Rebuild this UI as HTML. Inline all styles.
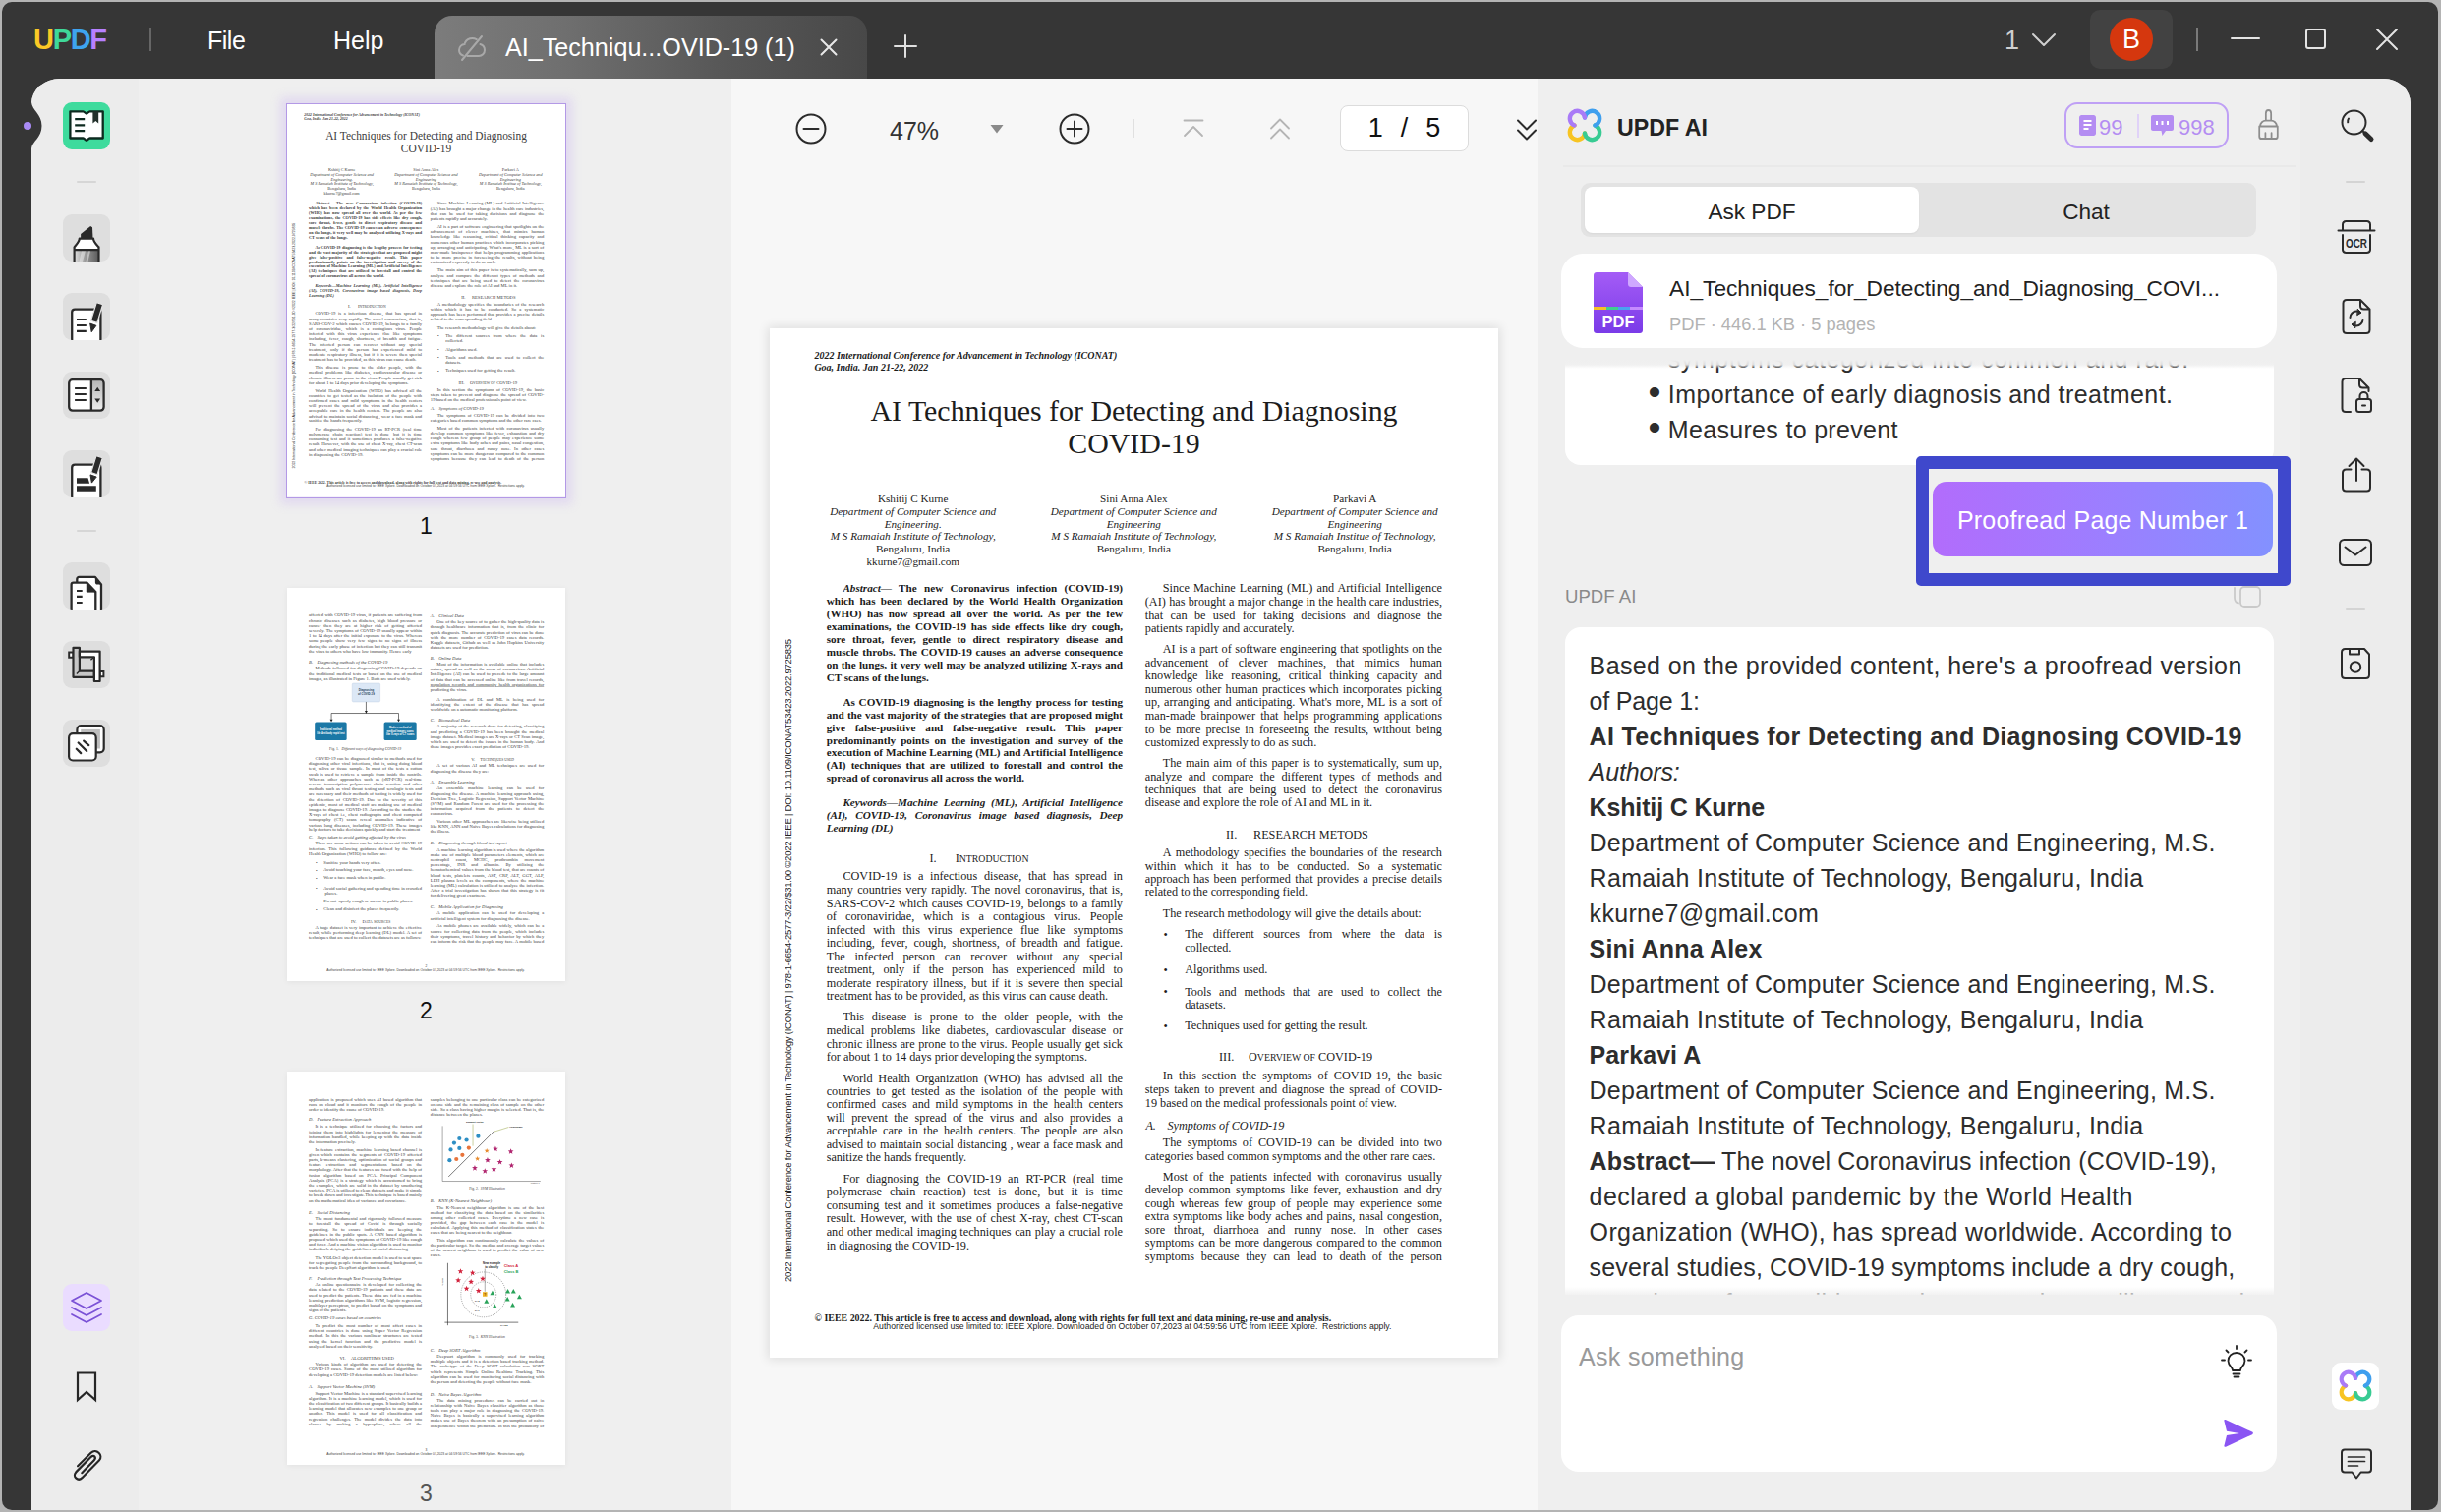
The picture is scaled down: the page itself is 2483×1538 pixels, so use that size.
<!DOCTYPE html>
<html lang="en"><head><meta charset="utf-8"><title>UPDF - AI_Techniques_for_Detecting_and_Diagnosing_COVID-19 (1)</title>
<style>

*{box-sizing:border-box}
html,body{margin:0;padding:0}
body{width:2483px;height:1538px;overflow:hidden;background:#b4b4b4;font-family:"Liberation Sans",sans-serif;position:relative}
#win{position:absolute;left:2px;top:2px;width:2478px;height:1534px;background:#363636;border-radius:10px;overflow:hidden}
#win>*{position:absolute}
#content{left:30px;top:78px;width:2420px;height:1456px;border-radius:29px 27px 0 0 / 25px 25px 0 0;overflow:hidden;background:#efefef}
#content>*{position:absolute;top:0;height:1456px}
#notch{left:30px;top:102px}
#dot{left:21.8px;top:121.800px;width:8.400px;height:8.400px;border-radius:50%;background:#a98bf5}
.abs{position:absolute}
/* title bar */
#tb{left:0;top:0;width:2478px;height:78px;color:#fff}
#tb>*{position:absolute}
.logo{left:32px;top:22px;font:bold 29px/32px "Liberation Sans",sans-serif;letter-spacing:-1.3px}
.tsep{width:2px;height:24px;top:26px;background:#666}
.menu{top:24px;font-size:25px;line-height:30px;color:#fff}
#tab{left:440px;top:14px;width:440px;height:64px;border-radius:18px 18px 0 0;background:linear-gradient(90deg,#7c7c7c 0%,#6f6f6f 30%,#585858 65%,#484848 100%)}
#tab>*{position:absolute}
.tabt{left:72px;top:16px;font-size:25.15px;line-height:32px;white-space:nowrap;color:#fff;letter-spacing:0}
/* left toolbar */
#ltb{left:0;width:109px;background:#ececec}
#ltb>*{position:absolute}
.tile{left:32px;width:48px;height:48px;border-radius:9px;background:#dedede;overflow:hidden}
.tile svg{position:absolute;left:0;top:0}
.hsep{left:46px;width:20px;height:2px;background:#d6d6d6;border-radius:1px}
#thumbs{left:109px;width:603px;background:#efefef}
#thumbs>*{position:absolute}
.thumb{width:283px;height:400px;background:#fff;overflow:hidden;box-shadow:0 1px 6px rgba(0,0,0,.06)}
.thumb.sel{outline:2.6px solid #b399e6;outline-offset:-1px;box-shadow:0 0 9px 7px rgba(190,160,245,.26)}
.thumb .pg{color:#3c3c3c}
.tn{left:151px;width:283px;text-align:center;font-size:23px;line-height:30px;color:#111}
.tn.g{color:#555}
#viewer{left:712px;width:820px;background:#f7f7f7}
#viewer>*{position:absolute}
.pgshadow{width:741px;height:1047px;box-shadow:0 0 10px 2px rgba(0,0,0,.10)}
.zt{font-size:25px;line-height:30px;color:#333}
.pbox{left:619px;top:27px;width:131px;height:47px;border:1.5px solid #dcdcdc;border-radius:8px;background:#fff;font-size:27px;line-height:44px;color:#111;text-align:center;white-space:pre;word-spacing:1.5px}
/* AI panel */
#ai{left:1532px;width:776px;background:#efefef}
#ai>*{position:absolute}
.ait{left:81px;top:34.5px;font:bold 23.2px/30px "Liberation Sans",sans-serif;color:#222;letter-spacing:0}
.badge{left:536px;top:24px;width:167px;height:47px;border:2px solid #bfa0f5;border-radius:13px}
.badge>*{position:absolute}
.badge span{font-size:22px;line-height:26px;color:#b48df2;top:11px}
.tabs{left:76px;top:106px;width:687px;height:55px;border-radius:9px;background:#e3e3e3}
.tabs>*{position:absolute}
.tabon{left:4px;top:4px;width:340px;height:47px;border-radius:8px;background:#fff;box-shadow:0 1px 2px rgba(0,0,0,.05)}
.tabl{top:13.5px;font-size:22.6px;line-height:32px;color:#222;text-align:center;width:340px;letter-spacing:0}
.card{background:#fff}
.fcard{left:56px;top:178px;width:728px;height:96px;border-radius:22px}
.fcard>*{position:absolute}
.fname{left:110px;top:19px;font-size:22.7px;line-height:32px;color:#222;white-space:nowrap;letter-spacing:0}
.fmeta{left:110px;top:58.5px;font-size:18.3px;line-height:26px;color:#b3b3b3;white-space:nowrap;letter-spacing:0}
.msg{font-size:25px;line-height:36px;color:#2d2d2d;white-space:nowrap}
.msg div{height:36px}
.lbl{left:60px;top:514px;font-size:18.6px;line-height:26px;color:#8a8a8a}
.hl{left:417px;top:384px;width:381px;height:132px;border:13.5px solid #3f48cc;border-radius:5px}
.pbtn{left:434px;top:410px;width:346px;height:76px;border-radius:14px;background:linear-gradient(90deg,#b26cfc 0%,#9a80ff 55%,#8391ff 100%);color:#fff;font-size:25px;line-height:79px;text-align:center;letter-spacing:0.18px;white-space:nowrap}
.inp{left:56px;top:1258px;width:728px;height:159px;border-radius:18px}
.inp>*{position:absolute}
.ph{left:18px;top:26px;font-size:25px;line-height:32px;color:#9a9a9a;letter-spacing:0.35px}
#rtb{left:2308px;width:112px;background:#ececec}
#rtb>*{position:absolute}


.pg{position:absolute;width:741px;height:1047px;background:#fff;font-family:"Liberation Serif",serif;color:#1c1c1c;overflow:hidden}
.pg .pp{position:absolute;margin:0}
.pg .jl{white-space:nowrap;text-align:justify;text-align-last:justify}
.pg .ll{white-space:nowrap;text-align:left}
.pg .hd{font:italic bold 10px "Liberation Serif",serif}
.pg .ttl{font-size:29.9px}
.pg .au{font-size:11.2px}
.pg .ab{font-size:11.15px;font-weight:bold}
.pg .kw{font-style:italic}
.pg .bd{font-size:12.22px}
.pg .sc{font-size:9.8px}
.pg .ft1{font:bold 9.95px "Liberation Serif",serif}
.pg .ft2{font:8.7px "Liberation Sans",sans-serif}
.pg .side{font:9.5px "Liberation Sans",sans-serif;letter-spacing:-0.22px;white-space:nowrap;transform-origin:0 0;transform:rotate(-90deg) translateY(-6px);color:#222}
.pg .nat{text-align:justify}
.pg .cap{font-size:9.8px}

</style></head>
<body>
<div id="win">
<div id="tb">
<div class="logo"><span style="color:#fbc926">U</span><span style="color:#3fd99a">P</span><span style="color:#3ea4ef">D</span><span style="color:#b780ff">F</span></div>
<div class="tsep" style="left:150px"></div>
<div class="menu" style="left:209px;letter-spacing:-0.5px">File</div>
<div class="menu" style="left:337px">Help</div>
<div id="tab">
<svg style="left:22px;top:18px" width="32" height="30" viewBox="0 0 32 30" fill="none" stroke="#a9a9a9" stroke-width="2" stroke-linecap="round" stroke-linejoin="round"><path d="M9 9.5C10.5 6.5 13.5 5 16.5 5c1.6 0 3 .4 4.300 1.100M24.500 11c2.600 .8 4.500 3 4.500 5.900C29 20.300 26.300 23 23 23H11.500M7 22.500C4.600 21.700 3 19.500 3 17c0-3.300 2.500-5.800 5.700-6"/><path d="M26 3L6 27"/></svg>
<div class="tabt">AI_Techniqu...OVID-19 (1)</div>
<svg style="left:391px;top:22px" width="20" height="20" viewBox="0 0 20 20" stroke="#e8e8e8" stroke-width="2" stroke-linecap="round"><path d="M2.500 2.500l15 15M17.500 2.500l-15 15"/></svg>
</div>
<svg style="left:907px;top:33px" width="24" height="24" viewBox="0 0 24 24" stroke="#e0e0e0" stroke-width="2" stroke-linecap="round"><path d="M12 1v22M1 12h22"/></svg>
<div style="left:2037px;top:23px;font-size:27px;line-height:32px;color:#d0d0d0">1</div>
<svg style="left:2064px;top:31px" width="26" height="16" viewBox="0 0 26 16" fill="none" stroke="#d0d0d0" stroke-width="2" stroke-linecap="round" stroke-linejoin="round"><path d="M2 2l11 11 11-11"/></svg>
<div style="left:2124px;top:8px;width:84px;height:60px;border-radius:10px;background:#424242"></div>
<div style="left:2144px;top:16px;width:44px;height:44px;border-radius:50%;background:#d5370e;color:#fff;font-size:27px;line-height:44px;text-align:center">B</div>
<div class="tsep" style="left:2232px;background:#7a7a7a"></div>
<svg style="left:2266px;top:28px" width="32" height="20" viewBox="0 0 32 20" stroke="#e4e4e4" stroke-width="2" stroke-linecap="round"><path d="M2 9h28"/></svg>
<svg style="left:2342px;top:26px" width="24" height="24" viewBox="0 0 24 24" fill="none" stroke="#e4e4e4" stroke-width="2"><rect x="2" y="2" width="19" height="19" rx="2"/></svg>
<svg style="left:2414px;top:26px" width="24" height="24" viewBox="0 0 24 24" stroke="#e4e4e4" stroke-width="2" stroke-linecap="round"><path d="M2 2l20 20M22 2L2 22"/></svg>
</div>
<div id="content">
<div id="ltb">
<div class="tile" style="top:24px;background:#3edb9d"><svg width="48" height="48" viewBox="0 0 48 48"><path d="M7.400 9.300H20.500c1.500 0 2.300 2.200 3.500 2.200s2-2.200 3.500-2.200H40.700V36.500H27.500c-1.500 0-2.300 2.400-3.500 2.400s-2-2.400-3.500-2.400H7.400z" fill="#fff" stroke="#0d2a1f" stroke-width="2.300" stroke-linejoin="round"/><path d="M30.400 9.300h5.800v12.100l-2.900-2.300-2.900 2.300z" fill="#22302b"/><path d="M12.200 17.200h10M12.200 23.300h10M12.200 29.100h10" stroke="#0d2a1f" stroke-width="2.300"/></svg></div>
<div class="hsep" style="top:104px"></div>
<div class="tile" style="top:138px;"><svg width="48" height="48" viewBox="0 0 48 48"><defs><linearGradient id="hg" x1="0" y1="0" x2="1" y2="0"><stop offset="0" stop-color="#dcdcdc"/><stop offset=".45" stop-color="#9a9a9a"/><stop offset="1" stop-color="#5c5c5c"/></linearGradient></defs><path d="M18.100 24.300V20l10-8.100 1.900 1.400.5 11z" fill="#2a2a2a"/><path d="M11.600 50V33.300c1.500-2 5.200-5 5.200-8.700h14.200c0 3.700 3.700 6.700 5.500 8.700V50z" fill="#fff"/><path d="M12 36.200h24V50H12z" fill="url(#hg)"/><path d="M19 37l-3 13h3.500l3.500-13zM26 37l-3 13h2l3-13z" fill="#e9e9e9" opacity=".55"/><path d="M11.600 50V33.300c1.500-2 5.200-5 5.200-8.700h14.200c0 3.700 3.700 6.700 5.500 8.700V50M11.600 36.200h24.900" fill="none" stroke="#2a2a2a" stroke-width="2.200" stroke-linejoin="round"/></svg></div>
<div class="tile" style="top:218px;"><svg width="48" height="48" viewBox="0 0 48 48"><path d="M9.200 50V19.600c0-1.700 1.300-3 3-3h23.200c1.700 0 3 1.300 3 3V50" fill="#fff" stroke="#2a2a2a" stroke-width="2.300"/><path d="M14 27h9.800M14 33h9.800M14 38.900h9.800" stroke="#2a2a2a" stroke-width="2.200"/><path d="M34.300 9.600l6.300 2.200-5.800 18.600-6.300-2.200z" fill="#2a2a2a" stroke="#e4e4e4" stroke-width="1.200" stroke-linejoin="round"/><path d="M27.700 31.100l6.200 2.200-4.700 6.400z" fill="#2a2a2a" stroke="#2a2a2a" stroke-width="1" stroke-linejoin="round"/></svg></div>
<div class="tile" style="top:298px;"><svg width="48" height="48" viewBox="0 0 48 48"><defs><linearGradient id="fg" x1="0" y1="0" x2="0" y2="1"><stop offset="0" stop-color="#b4b4b4"/><stop offset="1" stop-color="#ededed"/></linearGradient></defs><rect x="6.200" y="8.200" width="35.400" height="31.400" rx="3.500" fill="#fff"/><path d="M28.900 8.200h9.200c1.900 0 3.500 1.600 3.500 3.500v24.400c0 1.900-1.600 3.500-3.500 3.500h-9.200z" fill="url(#fg)"/><rect x="6.200" y="8.200" width="35.400" height="31.400" rx="3.500" fill="none" stroke="#2a2a2a" stroke-width="2.300"/><path d="M28.900 8.200v31.400" stroke="#2a2a2a" stroke-width="2.300"/><path d="M12.100 17h11.700M12.100 23h11.700M12.100 29h11.700" stroke="#2a2a2a" stroke-width="2.200"/><path d="M35.200 15.800l2.900 4.200h-5.800zM35.200 31.800l2.900-4.200h-5.800z" fill="#2a2a2a"/></svg></div>
<div class="tile" style="top:378px;"><svg width="48" height="48" viewBox="0 0 48 48"><path d="M9.200 50V17.700c0-1.700 1.300-3 3-3h23.200c1.700 0 3 1.300 3 3V50" fill="#fff" stroke="#2a2a2a" stroke-width="2.300"/><path d="M14 28.200h11.500l1.600 5.500H14zM14 36.300h19.800v5.400H14z" fill="#2a2a2a"/><path d="M34 5.600l6.300 2.200-5.300 17-6.300-2.200z" fill="#2a2a2a" stroke="#e4e4e4" stroke-width="1.200" stroke-linejoin="round"/><path d="M28 24.900l6.200 2.200-4.800 6z" fill="#2a2a2a" stroke="#2a2a2a" stroke-width="1" stroke-linejoin="round"/></svg></div>
<div class="hsep" style="top:459px"></div>
<div class="tile" style="top:492px;"><svg width="48" height="48" viewBox="0 0 48 48"><path d="M14.300 50V17c0-1.200.9-2.100 2.100-2.100h16.500l6.100 7.600V50z" fill="#fff" stroke="#2a2a2a" stroke-width="2.300" stroke-linejoin="round"/><path d="M32.900 14.900v5.500c0 1.200.9 2.100 2.100 2.100h4z" fill="#2a2a2a"/><path d="M8.600 50V22.700c0-1.200.9-2.100 2.100-2.100h13.600l9 9.500V50z" fill="#fff" stroke="#2a2a2a" stroke-width="2.300" stroke-linejoin="round"/><path d="M24.300 20.600v9.500h9z" fill="#2a2a2a" stroke="#2a2a2a" stroke-width="1" stroke-linejoin="round"/><path d="M14 29h5.700M14 34.900h5.700M14 41h5.700" stroke="#2a2a2a" stroke-width="2.200"/></svg></div>
<div class="tile" style="top:572px;"><svg width="48" height="48" viewBox="0 0 48 48"><path d="M16.900 16.300h15v14.300h-15z" fill="#d6d6d6"/><path d="M6.200 11.500h4.300v5.300H6.200zM37.600 31h3.800v5.300h-3.800z" fill="#fff" stroke="#2a2a2a" stroke-width="2"/><path d="M10.500 6.800h6.400v23.800h14.900v6.200H10.500z" fill="#c6c6c6" stroke="#2a2a2a" stroke-width="2.200" stroke-linejoin="round"/><path d="M16.900 10.600h20.700V41h-5.700V16.300H16.900z" fill="#fff" stroke="#2a2a2a" stroke-width="2.200" stroke-linejoin="round"/><path d="M31.900 16.300l-3.500 3M16.900 30.600l-3 3" stroke="#2a2a2a" stroke-width="1.400"/></svg></div>
<div class="tile" style="top:652px;"><svg width="48" height="48" viewBox="0 0 48 48"><rect x="14.400" y="6.100" width="27.300" height="27.200" rx="4" fill="#fff" stroke="#2a2a2a" stroke-width="2.200"/><rect x="18.200" y="9.900" width="19.700" height="19.600" fill="#bdbdbd"/><rect x="6.100" y="14.200" width="27.600" height="27.300" rx="4" fill="#fff" stroke="#2a2a2a" stroke-width="2.200"/><path d="M21.200 21.600l5.100 4.500M15.700 23.500l8.500 8.500M13.800 29.700l4.400 4.400" stroke="#2a2a2a" stroke-width="2.200" stroke-linecap="round"/></svg></div>
<div class="tile" style="top:1226px;background:#eadcff"><svg width="48" height="48" viewBox="0 0 48 48"><path d="M24 9l15 8-15 8-15-8z" fill="none" stroke="#7b52d6" stroke-width="1.800" stroke-linejoin="round"/><path d="M9 24l15 8 15-8M9 31l15 8 15-8" fill="none" stroke="#7b52d6" stroke-width="1.800" stroke-linejoin="round" stroke-linecap="round"/></svg></div>
<svg style="left:32px;top:1306px" width="48" height="48" viewBox="0 0 48 48"><path d="M15 10.500h18V38l-9-8-9 8z" fill="none" stroke="#262626" stroke-width="2.200" stroke-linejoin="miter"/></svg>
<svg style="left:32px;top:1386px" width="48" height="48" viewBox="0 0 48 48"><path d="M19 32l13-12.500c2.500-2.500 0-6-3-3.500L13 31c-4 4 1.500 10 6 6l18-17c5-5-2.500-13-8-8L15 25" fill="none" stroke="#262626" stroke-width="2.200" stroke-linecap="round" stroke-linejoin="round" transform="rotate(-2 24 24)"/></svg>
</div>
<div id="thumbs">
<div class="thumb sel" style="left:151px;top:26px"><div class="pg" style="transform:scale(0.38192);transform-origin:0 0"><div class="pp hd" style="left:45.4px;top:20.6px;line-height:14px;white-space:nowrap;">2022 International Conference for Advancement in Technology (ICONAT)</div>
<div class="pp hd" style="left:45.4px;top:32.6px;line-height:14px;white-space:nowrap;">Goa, India. Jan 21-22, 2022</div>
<div class="pp ttl" style="left:20.5px;width:700px;text-align:center;top:66.8px;line-height:34px;white-space:nowrap">AI Techniques for Detecting and Diagnosing</div>
<div class="pp ttl" style="left:20.5px;width:700px;text-align:center;top:100.0px;line-height:34px;white-space:nowrap">COVID-19</div>
<div class="pp au" style="left:25.7px;width:240px;text-align:center;top:167.2px;line-height:13px;white-space:nowrap">Kshitij C Kurne</div>
<div class="pp au" style="left:25.7px;width:240px;text-align:center;top:180.1px;line-height:13px;white-space:nowrap"><i>Department of Computer Science and</i></div>
<div class="pp au" style="left:25.7px;width:240px;text-align:center;top:193.1px;line-height:13px;white-space:nowrap"><i>Engineering.</i></div>
<div class="pp au" style="left:25.7px;width:240px;text-align:center;top:205.1px;line-height:13px;white-space:nowrap"><i>M S Ramaiah Institute of Technology,</i></div>
<div class="pp au" style="left:25.7px;width:240px;text-align:center;top:217.7px;line-height:13px;white-space:nowrap">Bengaluru, India</div>
<div class="pp au" style="left:25.7px;width:240px;text-align:center;top:230.9px;line-height:13px;white-space:nowrap">kkurne7@gmail.com</div>
<div class="pp au" style="left:250.3px;width:240px;text-align:center;top:167.2px;line-height:13px;white-space:nowrap">Sini Anna Alex</div>
<div class="pp au" style="left:250.3px;width:240px;text-align:center;top:180.1px;line-height:13px;white-space:nowrap"><i>Department of Computer Science and</i></div>
<div class="pp au" style="left:250.3px;width:240px;text-align:center;top:193.1px;line-height:13px;white-space:nowrap"><i>Engineering</i></div>
<div class="pp au" style="left:250.3px;width:240px;text-align:center;top:205.1px;line-height:13px;white-space:nowrap"><i>M S Ramaiah Institute of Technology,</i></div>
<div class="pp au" style="left:250.3px;width:240px;text-align:center;top:217.7px;line-height:13px;white-space:nowrap">Bengaluru, India</div>
<div class="pp au" style="left:475.2px;width:240px;text-align:center;top:167.2px;line-height:13px;white-space:nowrap">Parkavi A</div>
<div class="pp au" style="left:475.2px;width:240px;text-align:center;top:180.1px;line-height:13px;white-space:nowrap"><i>Department of Computer Science and</i></div>
<div class="pp au" style="left:475.2px;width:240px;text-align:center;top:193.1px;line-height:13px;white-space:nowrap"><i>Engineering</i></div>
<div class="pp au" style="left:475.2px;width:240px;text-align:center;top:205.1px;line-height:13px;white-space:nowrap"><i>M S Ramaiah Institue of Technology,</i></div>
<div class="pp au" style="left:475.2px;width:240px;text-align:center;top:217.7px;line-height:13px;white-space:nowrap">Bengaluru, India</div>
<div class="pp ab" style="left:57.7px;top:258.0px;width:301.3px;line-height:12.93px"><div class="jl" style="padding-left:16.7px"><i>Abstract</i>— The new Coronavirus infection (COVID-19)</div><div class="jl">which has been declared by the World Health Organization</div><div class="jl">(WHO) has now spread all over the world. As per the few</div><div class="jl">examinations, the COVID-19 has side effects like dry cough,</div><div class="jl">sore throat, fever, gentle to direct respiratory disease and</div><div class="jl">muscle throbs. The COVID-19 causes an adverse consequence</div><div class="jl">on the lungs, it very well may be analyzed utilizing X-rays and</div><div class="ll">CT scans of the lungs.</div></div>
<div class="pp ab" style="left:57.7px;top:373.9px;width:301.3px;line-height:12.87px"><div class="jl" style="padding-left:16.7px">As COVID-19 diagnosing is the lengthy process for testing</div><div class="jl">and the vast majority of the strategies that are proposed might</div><div class="jl">give false-positive and false-negative result. This paper</div><div class="jl">predominantly points on the investigation and survey of the</div><div class="jl">execution of Machine Learning (ML) and Artificial Intelligence</div><div class="jl">(AI) techniques that are utilized to forestall and control the</div><div class="ll">spread of coronavirus all across the world.</div></div>
<div class="pp ab kw" style="left:57.7px;top:476.0px;width:301.3px;line-height:12.95px"><div class="jl" style="padding-left:16.7px">Keywords—Machine Learning (ML), Artificial Intelligence</div><div class="jl">(AI), COVID-19, Coronavirus image based diagnosis, Deep</div><div class="ll">Learning (DL)</div></div>
<div class="pp bd" style="left:162.4px;top:532.1px;line-height:14px;white-space:nowrap;">I.</div>
<div class="pp bd" style="left:188.7px;top:532.1px;line-height:14px;white-space:nowrap;">I<span class="sc">NTRODUCTION</span></div>
<div class="pp bd" style="left:57.7px;top:551.4px;width:301.3px;line-height:13.57px"><div class="jl" style="padding-left:16.7px">COVID-19 is a infectious disease, that has spread in</div><div class="jl">many countries very rapidly. The novel coronavirus, that is,</div><div class="jl">SARS-COV-2 which causes COVID-19, belongs to a family</div><div class="jl">of coronaviridae, which is a contagious virus. People</div><div class="jl">infected with this virus experience flue like symptoms</div><div class="jl">including, fever, cough, shortness, of breadth and fatigue.</div><div class="jl">The infected person can recover without any special</div><div class="jl">treatment, only if the person has experienced mild to</div><div class="jl">moderate respiratory illness, but if it is severe then special</div><div class="ll">treatment has to be provided, as this virus can cause death.</div></div>
<div class="pp bd" style="left:57.7px;top:694.4px;width:301.3px;line-height:13.57px"><div class="jl" style="padding-left:16.7px">This disease is prone to the older people, with the</div><div class="jl">medical problems like diabetes, cardiovascular disease or</div><div class="jl">chronic illness are prone to the virus. People usually get sick</div><div class="ll">for about 1 to 14 days prior developing the symptoms.</div></div>
<div class="pp bd" style="left:57.7px;top:756.5px;width:301.3px;line-height:13.48px"><div class="jl" style="padding-left:16.7px">World Health Organization (WHO) has advised all the</div><div class="jl">countries to get tested as the isolation of the people with</div><div class="jl">confirmed cases and mild symptoms in the health centers</div><div class="jl">will prevent the spread of the virus and also provides a</div><div class="jl">acceptable care in the health centers. The people are also</div><div class="jl">advised to maintain social distancing , wear a face mask and</div><div class="ll">sanitize the hands frequently.</div></div>
<div class="pp bd" style="left:57.7px;top:858.6px;width:301.3px;line-height:13.60px"><div class="jl" style="padding-left:16.7px">For diagnosing the COVID-19 an RT-PCR (real time</div><div class="jl">polymerase chain reaction) test is done, but it is time</div><div class="jl">consuming test and it sometimes produces a false-negative</div><div class="jl">result. However, with the use of chest X-ray, chest CT-scan</div><div class="jl">and other medical imaging techniques can play a crucial role</div><div class="ll">in diagnosing the COVID-19.</div></div>
<div class="pp bd" style="left:381.8px;top:258.2px;width:302.2px;line-height:13.70px"><div class="jl" style="padding-left:18px">Since Machine Learning (ML) and Artificial Intelligence</div><div class="jl">(AI) has brought a major change in the health care industries,</div><div class="jl">that can be used for taking decisions and diagnose the</div><div class="ll">patients rapidly and accurately.</div></div>
<div class="pp bd" style="left:381.8px;top:320.3px;width:302.2px;line-height:13.54px"><div class="jl" style="padding-left:18px">AI is a part of software engineering that spotlights on the</div><div class="jl">advancement of clever machines, that mimics human</div><div class="jl">knowledge like reasoning, critical thinking capacity and</div><div class="jl">numerous other human practices which incorporates picking</div><div class="jl">up, arranging and anticipating. What's more, ML is a sort of</div><div class="jl">man-made brainpower that helps programming applications</div><div class="jl">to be more precise in foreseeing the results, without being</div><div class="ll">customized expressly to do as such.</div></div>
<div class="pp bd" style="left:381.8px;top:436.2px;width:302.2px;line-height:13.40px"><div class="jl" style="padding-left:18px">The main aim of this paper is to systematically, sum up,</div><div class="jl">analyze and compare the different types of methods and</div><div class="jl">techniques that are being used to detect the coronavirus</div><div class="ll">disease and explore the role of AI and ML in it.</div></div>
<div class="pp bd" style="left:464.0px;top:507.5px;line-height:14px;white-space:nowrap;">II.</div>
<div class="pp bd" style="left:492.0px;top:507.5px;line-height:14px;white-space:nowrap;">RESEARCH METODS</div>
<div class="pp bd" style="left:381.8px;top:527.3px;width:302.2px;line-height:13.37px"><div class="jl" style="padding-left:18px">A methodology specifies the boundaries of the research</div><div class="jl">within which it has to be conducted. So a systematic</div><div class="jl">approach has been performed that provides a precise details</div><div class="ll">related to the corresponding field.</div></div>
<div class="pp bd" style="left:399.8px;top:588.1px;line-height:14px;white-space:nowrap;">The research methodology will give the details about:</div>
<div class="pp bd" style="left:400.5px;top:610.3px;line-height:14px;white-space:nowrap;">•</div>
<div class="pp bd" style="left:422.2px;top:610.3px;width:261.8px;line-height:13.90px"><div class="jl">The different sources from where the data is</div><div class="ll">collected.</div></div>
<div class="pp bd" style="left:400.5px;top:646.0px;line-height:14px;white-space:nowrap;">•</div>
<div class="pp bd" style="left:422.2px;top:646.0px;width:261.8px;line-height:13.90px"><div class="ll">Algorithms used.</div></div>
<div class="pp bd" style="left:400.5px;top:668.1px;line-height:14px;white-space:nowrap;">•</div>
<div class="pp bd" style="left:422.2px;top:668.6px;width:261.8px;line-height:13.10px"><div class="jl">Tools and methods that are used to collect the</div><div class="ll">datasets.</div></div>
<div class="pp bd" style="left:400.5px;top:702.9px;line-height:14px;white-space:nowrap;">•</div>
<div class="pp bd" style="left:422.2px;top:702.9px;width:261.8px;line-height:13.90px"><div class="ll">Techniques used for getting the result.</div></div>
<div class="pp bd" style="left:457.0px;top:733.8px;line-height:14px;white-space:nowrap;">III.</div>
<div class="pp bd" style="left:487.0px;top:733.8px;line-height:14px;white-space:nowrap;">O<span class="sc">VERVIEW OF</span> COVID-19</div>
<div class="pp bd" style="left:381.8px;top:754.3px;width:302.2px;line-height:13.90px"><div class="jl" style="padding-left:18px">In this section the symptoms of COVID-19, the basic</div><div class="jl">steps taken to prevent and diagnose the spread of COVID-</div><div class="ll">19 based on the medical professionals point of view.</div></div>
<div class="pp bd" style="left:382.4px;top:804.2px;line-height:14px;white-space:nowrap;"><i>A.</i></div>
<div class="pp bd" style="left:404.5px;top:804.2px;line-height:14px;white-space:nowrap;"><i>Symptoms of COVID-19</i></div>
<div class="pp bd" style="left:381.8px;top:821.0px;width:302.2px;line-height:14.00px"><div class="jl" style="padding-left:18px">The symptoms of COVID-19 can be divided into two</div><div class="ll">categories based common symptoms and the other rare caes.</div></div>
<div class="pp bd" style="left:381.8px;top:856.5px;width:302.2px;line-height:13.50px"><div class="jl" style="padding-left:18px">Most of the patients infected with coronavirus usually</div><div class="jl">develop common symptoms like fever, exhaustion and dry</div><div class="jl">cough whereas few group of people may experience some</div><div class="jl">extra symptoms like body aches and pains, nasal congestion,</div><div class="jl">sore throat, diarrhoea and runny nose. In other cases</div><div class="jl">symptoms can be more dangerous compared to the common</div><div class="jl">symptoms because they can lead to death of the person</div></div>
<div class="pp ft1" style="left:45.5px;top:1000.5px;line-height:11px;white-space:nowrap;">© IEEE 2022. This article is free to access and download, along with rights for full text and data mining, re-use and analysis.</div>
<div class="pp ft2" style="left:105.3px;top:1010.3px;line-height:10px;white-space:nowrap;">Authorized licensed use limited to: IEEE Xplore. Downloaded on October 07,2023 at 04:59:56 UTC from IEEE Xplore.&nbsp; Restrictions apply.</div>
<div class="pp side" style="left:19px;top:970px">2022 International Conference for Advancement in Technology (ICONAT) | 978-1-6654-2577-3/22/$31.00 ©2022 IEEE | DOI: 10.1109/ICONAT53423.2022.9725835</div></div></div>
<div class="tn" style="top:440px">1</div>
<div class="thumb" style="left:151px;top:518px"><div class="pg" style="transform:scale(0.38192);transform-origin:0 0"><div class="pp bd nat" style="left:57.7px;top:67.3px;width:301.3px;line-height:13.57px;text-indent:0px">affected with COVID-19 virus, if patients are suffering from chronic diseases such as diabetes, high blood pressure or cancer then they are at higher risk of getting affected severely. The symptoms of COVID-19 usually appear within 1 to 14 days after the initial exposure to the virus. Whereas some people show very few signs to no signs of illness during the early phase of infection but they can still transmit the virus to others who have low immunity. Hence early</div>
<div class="pp bd" style="left:57.7px;top:190.9px;line-height:14px;white-space:nowrap;"><i>B.</i></div><div class="pp bd" style="left:79.7px;top:190.9px;line-height:14px;white-space:nowrap;"><i>Diagnosing methods of the COVID-19</i></div>
<div class="pp bd nat" style="left:57.7px;top:208.4px;width:301.3px;line-height:13.57px;text-indent:17px">Methods followed for diagnosing COVID-19 depends on the traditional medical tests or based on the use of medical images, as illustrated in Figure 1. Both are used widely.</div>
<svg class="pp" style="left:57px;top:250px" width="304" height="165" viewBox="57 250 304 165">
<rect x="173.4" y="254" width="74.4" height="49.6" rx="3" fill="#dce8f6" stroke="#b9cbe0" stroke-width="1"/>
<text x="210.6" y="276" font-family="Liberation Sans, sans-serif" font-weight="bold" font-size="7.5" text-anchor="middle" fill="#1f3b57">Diagnosing</text>
<text x="210.6" y="286" font-family="Liberation Sans, sans-serif" font-weight="bold" font-size="7.5" text-anchor="middle" fill="#1f3b57">of COVID-19</text>
<path d="M210.6 303.6V333.9M118 333.9H297.2M118 333.9V354M297.2 333.9V354" stroke="#222" stroke-width="1.6" fill="none"/>
<path d="M114 350l4 7 4-7zM293.2 350l4 7 4-7zM206.6 327l4 7 4-7z" fill="#222"/>
<rect x="73.8" y="357.2" width="85" height="48.5" rx="4" fill="#1b78a6"/>
<rect x="258.2" y="357.2" width="86.6" height="48.5" rx="4" fill="#1b78a6"/>
<text x="116.3" y="379" font-family="Liberation Sans, sans-serif" font-weight="bold" font-size="6.8" text-anchor="middle" fill="#fff">Traditional method</text>
<text x="116.3" y="389" font-family="Liberation Sans, sans-serif" font-weight="bold" font-size="6.8" text-anchor="middle" fill="#fff">like Antibody rapid test</text>
<text x="301.5" y="374" font-family="Liberation Sans, sans-serif" font-weight="bold" font-size="6.8" text-anchor="middle" fill="#fff">Modern method of</text>
<text x="301.5" y="384" font-family="Liberation Sans, sans-serif" font-weight="bold" font-size="6.8" text-anchor="middle" fill="#fff">medical images scans</text>
<text x="301.5" y="394" font-family="Liberation Sans, sans-serif" font-weight="bold" font-size="6.8" text-anchor="middle" fill="#fff">like X-rays or CT scans</text>
</svg>
<div class="pp cap" style="left:58.4px;width:300px;text-align:center;top:424.0px;line-height:12px;white-space:nowrap">Fig. 1.&nbsp;&nbsp; <i>Different ways of diagnosing COVID-19</i></div>
<div class="pp bd nat" style="left:57.7px;top:448.2px;width:301.3px;line-height:13.57px;text-indent:17px">COVID-19 can be diagnosed similar to methods used for diagnosing other viral infections, that is, using doing blood test, saliva or tissue sample. In most of the tests a cotton swab is used to retrieve a sample from inside the nostrils. Whereas other approaches such as (rRT-PCR) real-time reverse transcription–polymerase chain reaction and other methods such as viral throat testing and serologic tests and are necessary and their methods of testing is widely used for the detection of COVID-19. Due to the severity of this epidemic, most of medical staff are making use of medical images to diagnose COVID-19. According to the studies the X-rays of chest i.e, chest radiographs and chest computed tomography (CT) scans reveal anomalies indicative of various lung diseases, including COVID-19. These images help doctors to take decisions quickly and start the treatment</div>
<div class="pp bd" style="left:57.7px;top:655.9px;line-height:14px;white-space:nowrap;"><i>C.</i></div><div class="pp bd" style="left:79.7px;top:655.9px;line-height:14px;white-space:nowrap;"><i>Steps taken to avoid getting affected by the virus</i></div>
<div class="pp bd nat" style="left:57.7px;top:674.2px;width:301.3px;line-height:13.57px;text-indent:17px">There are some actions can be taken to avoid COVID-19 infection. This following guidance defined by the World Health Organization (WHO) to follow are:</div>
<div class="pp bd" style="left:76.2px;top:724.3px;line-height:14px;white-space:nowrap;">•</div><div class="pp bd nat" style="left:97.7px;top:724.5px;width:261.3px;line-height:13.57px;text-indent:0px">Sanitize your hands very often.</div>
<div class="pp bd" style="left:76.2px;top:745.1px;line-height:14px;white-space:nowrap;">•</div><div class="pp bd nat" style="left:97.7px;top:745.3px;width:261.3px;line-height:13.57px;text-indent:0px">Avoid touching your face, mouth, eyes and nose.</div>
<div class="pp bd" style="left:76.2px;top:765.9px;line-height:14px;white-space:nowrap;">•</div><div class="pp bd nat" style="left:97.7px;top:766.1px;width:261.3px;line-height:13.57px;text-indent:0px">Wear a face mask when in public.</div>
<div class="pp bd" style="left:76.2px;top:792.7px;line-height:14px;white-space:nowrap;">•</div><div class="pp bd nat" style="left:97.7px;top:792.9px;width:261.3px;line-height:13.57px;text-indent:0px">Avoid social gathering and spending time in crowded &nbsp;places.</div>
<div class="pp bd" style="left:76.2px;top:826.5px;line-height:14px;white-space:nowrap;">•</div><div class="pp bd nat" style="left:97.7px;top:826.7px;width:261.3px;line-height:13.57px;text-indent:0px">Do not &nbsp;openly cough or sneeze in public places.</div>
<div class="pp bd" style="left:76.2px;top:849.9px;line-height:14px;white-space:nowrap;">•</div><div class="pp bd nat" style="left:97.7px;top:850.1px;width:261.3px;line-height:13.57px;text-indent:0px">Clean and disinfect the places frequently.</div>
<div class="pp bd" style="left:170.0px;top:881.0px;line-height:14px;white-space:nowrap;">IV.</div><div class="pp bd" style="left:200.0px;top:881.0px;line-height:14px;white-space:nowrap;">D<span class="sc">ATA</span> S<span class="sc">OURCES</span></div>
<div class="pp bd nat" style="left:57.7px;top:898.6px;width:301.3px;line-height:13.57px;text-indent:17px">A huge dataset is very important to achieve the effective result, while performing deep learning (DL) model. A set of techniques that are used to collect the datasets are as follows:</div>
<div class="pp bd" style="left:381.8px;top:67.1px;line-height:14px;white-space:nowrap;"><i>A.</i></div><div class="pp bd" style="left:403.8px;top:67.1px;line-height:14px;white-space:nowrap;"><i>Clinical Data</i></div>
<div class="pp bd nat" style="left:381.8px;top:84.6px;width:302.2px;line-height:13.57px;text-indent:17px">One of the key source of to gather the high-quality data is through healthcare information that is, from the clinic for quick diagnosis. The accurate prediction of virus can be done with the more number of COVID-19 cases data records. Kaggle datasets, Github as well as John Hopkins University datasets are used for prediction.</div>
<div class="pp bd" style="left:381.8px;top:179.7px;line-height:14px;white-space:nowrap;"><i>B.</i></div><div class="pp bd" style="left:403.8px;top:179.7px;line-height:14px;white-space:nowrap;"><i>Online Data</i></div>
<div class="pp bd nat" style="left:381.8px;top:197.2px;width:302.2px;line-height:13.57px;text-indent:17px">Most of the information is available online that includes nature, spread as well as the areas of coronavirus. Artificial Intelligence (AI) can be used to precede to the large amount of data that can be accessed online like from travel records, <u>population records and community health organizations for</u> predicting the virus.</div>
<div class="pp bd nat" style="left:381.8px;top:289.8px;width:302.2px;line-height:13.57px;text-indent:17px">A combination of DL and ML is being used for identifying the extent of the disease that has spread worldwide on a automatic monitoring platform.</div>
<div class="pp bd" style="left:381.8px;top:345.0px;line-height:14px;white-space:nowrap;"><i>C.</i></div><div class="pp bd" style="left:403.8px;top:345.0px;line-height:14px;white-space:nowrap;"><i>Biomedical Data</i></div>
<div class="pp bd nat" style="left:381.8px;top:363.2px;width:302.2px;line-height:13.57px;text-indent:17px">A majority of the research done for detecting, classifying and predicting a COVID-19 has been brought the medical image dataset. Medical images are X-rays or CT Scan image, which are used to detect the issues in the human body. And these images provides exact prediction of COVID-19.</div>
<div class="pp bd" style="left:490.0px;top:449.0px;line-height:14px;white-space:nowrap;">V.</div><div class="pp bd" style="left:514.0px;top:449.0px;line-height:14px;white-space:nowrap;">T<span class="sc">ECHNIQUES USED</span></div>
<div class="pp bd nat" style="left:381.8px;top:467.2px;width:302.2px;line-height:13.57px;text-indent:17px">A set of various AI and ML techniques are used for diagnosing the disease they are:</div>
<div class="pp bd" style="left:381.8px;top:509.6px;line-height:14px;white-space:nowrap;"><i>A.</i></div><div class="pp bd" style="left:403.8px;top:509.6px;line-height:14px;white-space:nowrap;"><i>Ensemble Learning</i></div>
<div class="pp bd nat" style="left:381.8px;top:528.0px;width:302.2px;line-height:13.57px;text-indent:17px">An ensemble machine learning can be used for diagnosing the disease. A machine learning approach using, Decision Tree, Logistic Regression, Support Vector Machine (SVM) and Random Forest are used for the processing the information acquired from the patients to detect the coronavirus.</div>
<div class="pp bd nat" style="left:381.8px;top:616.2px;width:302.2px;line-height:13.57px;text-indent:17px">Various other ML approaches are likewise being utilized like KNN, ANN and Naïve Bayes calculations for diagnosing the illness.</div>
<div class="pp bd" style="left:381.8px;top:671.5px;line-height:14px;white-space:nowrap;"><i>B.</i></div><div class="pp bd" style="left:403.8px;top:671.5px;line-height:14px;white-space:nowrap;"><i>Diagnosing through blood test report</i></div>
<div class="pp bd nat" style="left:381.8px;top:690.7px;width:302.2px;line-height:13.57px;text-indent:17px">A machine learning algorithm is used where the algorithm make use of multiple blood parameters elements, which are neutrophil count, MCHC, prothrombin movement percentage, INR and albumin. By utilizing the hematochemical values from the blood test, that are counts of blood tests, platelets counts, AST, CRP, ALT, GGT, ALP, LDH plasma levels as the components, where the machine learning (ML) calculation is utilized to analyze the infection. After a trial investigation has shown that this strategy is fit for delivering great exactness.</div>
<div class="pp bd" style="left:381.8px;top:842.0px;line-height:14px;white-space:nowrap;"><i>C.</i></div><div class="pp bd" style="left:403.8px;top:842.0px;line-height:14px;white-space:nowrap;"><i>Mobile Application for Diagnosing</i></div>
<div class="pp bd nat" style="left:381.8px;top:860.2px;width:302.2px;line-height:13.57px;text-indent:17px">A mobile application can be used for developing a artificial intelligent system for diagnosing the disease.</div>
<div class="pp bd nat" style="left:381.8px;top:894.2px;width:302.2px;line-height:13.57px;text-indent:17px;text-align-last:justify">As mobile phones are available widely, which can be a source for collecting data from the people, which includes their symptoms, travel history and behavior by which they can inform the risk that the people may face. A mobile based</div>
<div class="pp ft2" style="left:350.5px;width:40px;text-align:center;top:1003.0px;line-height:10px;white-space:nowrap">2</div>
<div class="pp ft2" style="left:105.3px;top:1012.0px;line-height:10px;white-space:nowrap;">Authorized licensed use limited to: IEEE Xplore. Downloaded on October 07,2023 at 04:59:56 UTC from IEEE Xplore.&nbsp; Restrictions apply.</div></div></div>
<div class="tn" style="top:933px">2</div>
<div class="thumb" style="left:151px;top:1010px"><div class="pg" style="transform:scale(0.38192);transform-origin:0 0"><div class="pp bd nat" style="left:57.7px;top:67.5px;width:301.3px;line-height:13.57px;text-indent:0px">application is proposed which uses AI based algorithm that runs on cloud and it monitors the cough of the people in order to identify the cause of COVID-19.</div>
<div class="pp bd" style="left:57.7px;top:120.8px;line-height:14px;white-space:nowrap;"><i>D.</i></div><div class="pp bd" style="left:79.7px;top:120.8px;line-height:14px;white-space:nowrap;"><i>Feature Extraction Approach</i></div>
<div class="pp bd nat" style="left:57.7px;top:140.0px;width:301.3px;line-height:13.57px;text-indent:17px">It is a technique utilized for choosing the factors and joining them into highlights for lessening the measure of information handled, while keeping up with the data inside the information precisely.</div>
<div class="pp bd nat" style="left:57.7px;top:201.2px;width:301.3px;line-height:13.57px;text-indent:17px">In feature extraction, machine learning based channel is given which contains the segments of COVID-19 affected parts, k-means clustering, optimization of social groups and feature extraction and segmentations based on the morphology. After that the features are fused with the help of fusion algorithm based on PCA. Principal Component Analysis (PCA) is a strategy which is accustomed to bring the examples, which are solid in the dataset by smothering varieties. PCA is utilized to clean datasets and make it simple to break down and investigate.This technique is based mainly on the mathematical idea of variance and covariance.</div>
<div class="pp bd" style="left:57.7px;top:368.3px;line-height:14px;white-space:nowrap;"><i>E.</i></div><div class="pp bd" style="left:79.7px;top:368.3px;line-height:14px;white-space:nowrap;"><i>Social Distancing</i></div>
<div class="pp bd nat" style="left:57.7px;top:385.8px;width:301.3px;line-height:13.57px;text-indent:17px">The most fundamental and rigorously followed measure to forestall the spread of Covid is through socially separating. So to ensure individuals are keeping the guidelines in the public spots. A CNN based algorithm is proposed which used the symptoms of COVID-19 like cough and fever. And a machine vision algorithm is used to monitor individuals defying the guidelines of social distancing.</div>
<div class="pp bd nat" style="left:57.7px;top:489.2px;width:301.3px;line-height:13.57px;text-indent:17px">The YOLOv3 object detection model is used to seat space for segregating people from the surrounding background, to track the people DeepSort algorithm is used.</div>
<div class="pp bd" style="left:57.7px;top:543.4px;line-height:14px;white-space:nowrap;"><i>F.</i></div><div class="pp bd" style="left:79.7px;top:543.4px;line-height:14px;white-space:nowrap;"><i>Prediction through Text Processing Technique</i></div>
<div class="pp bd nat" style="left:57.7px;top:561.7px;width:301.3px;line-height:13.57px;text-indent:17px">An online questionnaire is developed for collecting the data related to the COVID-19 patients and these data are used to predict the patients. These data are fed in a machine learning prediction algorithms like SVM, logistic regression, multilayer perceptron, to predict based on the symptoms and signs of the patients.</div>
<div class="pp bd" style="left:57.7px;top:649.5px;line-height:14px;white-space:nowrap;"><i>G. COVID-19 cases based on countries</i></div>
<div class="pp bd nat" style="left:57.7px;top:671.2px;width:301.3px;line-height:13.57px;text-indent:17px">To predict the most number of most affect cases in different countries is done using Super Vector Regression method. In this the various nonlinear structures are tested using the kernel function and the predictive model is analyzed based on their sensitivity.</div>
<div class="pp bd" style="left:140.0px;top:754.7px;line-height:14px;white-space:nowrap;">VI.</div><div class="pp bd" style="left:170.0px;top:754.7px;line-height:14px;white-space:nowrap;">ALGORITHMS USED</div>
<div class="pp bd nat" style="left:57.7px;top:773.9px;width:301.3px;line-height:13.57px;text-indent:17px">Various kinds of algorithm are used for detecting the COVID-19 cases. Some of the most utilized algorithm for developing a COVID-19 detection models are listed below:</div>
<div class="pp bd" style="left:57.7px;top:833.2px;line-height:14px;white-space:nowrap;"><i>A.</i></div><div class="pp bd" style="left:79.7px;top:833.2px;line-height:14px;white-space:nowrap;"><i>Support Vector Machine (SVM)</i></div>
<div class="pp bd nat" style="left:57.7px;top:850.7px;width:301.3px;line-height:13.57px;text-indent:17px;text-align-last:justify">Support Vector Machine is a standard supervised learning algorithm. It is a machine learning model, which is used for the classification of two different groups. It basically builds a learning model that allocates new examples to one group or another. This model is used for all classification and regression challenges. The model divides the data into classes by making a hyperplane, where all the</div>
<div class="pp bd nat" style="left:381.8px;top:67.5px;width:302.2px;line-height:13.57px;text-indent:0px">samples belonging to one particular class can be categorized on one side and the remaining class of sample on the other side. So a class having higher margin is selected. That is, the distance between the planes.</div>
<svg class="pp" style="left:400px;top:125px" width="290" height="175" viewBox="400 125 290 175"><path d="M414 145V292H675" stroke="#444" stroke-width="1.2" fill="none"/><path d="M430 280L552 158" stroke="#222" stroke-width="1.6"/><path d="M495 198V140M552 160L590 148" stroke="#8a9a30" stroke-width="1.2"/><text x="500" y="136" font-family="Liberation Sans, sans-serif" font-size="6.5" font-weight="bold" text-anchor="middle" fill="#222">Support Vector</text><text x="610" y="150" font-family="Liberation Sans, sans-serif" font-size="6.5" font-weight="bold" text-anchor="middle" fill="#222">Hyperplane</text><text x="672" y="299" font-family="Liberation Sans, sans-serif" font-size="5.5" text-anchor="end" fill="#444">Feature 1</text><circle cx="445" cy="190" r="5.5" fill="#2e8fc4"/><circle cx="459" cy="178" r="5.5" fill="#2e8fc4"/><circle cx="478" cy="182" r="5.5" fill="#2e8fc4"/><circle cx="509" cy="172" r="5.5" fill="#2e8fc4"/><circle cx="436" cy="208" r="5.5" fill="#2e8fc4"/><circle cx="459" cy="204" r="5.5" fill="#2e8fc4"/><circle cx="433" cy="236" r="5.5" fill="#2e8fc4"/><circle cx="484" cy="203" r="5.5" fill="#e8743b"/><circle cx="467" cy="222" r="5.5" fill="#e8743b"/><circle cx="451" cy="233" r="5.5" fill="#e8743b"/><polygon points="555.0,198.0 557.0,203.3 562.6,203.5 558.2,207.0 559.7,212.5 555.0,209.4 550.3,212.5 551.8,207.0 547.4,203.5 553.0,203.3" fill="#b0246e"/><polygon points="596.0,205.0 598.0,210.3 603.6,210.5 599.2,214.0 600.7,219.5 596.0,216.4 591.3,219.5 592.8,214.0 588.4,210.5 594.0,210.3" fill="#b0246e"/><polygon points="534.0,228.0 536.0,233.3 541.6,233.5 537.2,237.0 538.7,242.5 534.0,239.4 529.3,242.5 530.8,237.0 526.4,233.5 532.0,233.3" fill="#b0246e"/><polygon points="567.0,233.0 569.0,238.3 574.6,238.5 570.2,242.0 571.7,247.5 567.0,244.4 562.3,247.5 563.8,242.0 559.4,238.5 565.0,238.3" fill="#b0246e"/><polygon points="598.0,242.0 600.0,247.3 605.6,247.5 601.2,251.0 602.7,256.5 598.0,253.4 593.3,256.5 594.8,251.0 590.4,247.5 596.0,247.3" fill="#b0246e"/><polygon points="500.0,249.0 502.0,254.3 507.6,254.5 503.2,258.0 504.7,263.5 500.0,260.4 495.3,263.5 496.8,258.0 492.4,254.5 498.0,254.3" fill="#b0246e"/><polygon points="551.0,252.0 553.0,257.3 558.6,257.5 554.2,261.0 555.7,266.5 551.0,263.4 546.3,266.5 547.8,261.0 543.4,257.5 549.0,257.3" fill="#b0246e"/><polygon points="527.0,257.0 529.0,262.3 534.6,262.5 530.2,266.0 531.7,271.5 527.0,268.4 522.3,271.5 523.8,266.0 519.4,262.5 525.0,262.3" fill="#b0246e"/><polygon points="532.0,204.0 533.7,208.6 538.7,208.8 534.8,211.9 536.1,216.7 532.0,213.9 527.9,216.7 529.2,211.9 525.3,208.8 530.3,208.6" fill="#e88b2e"/><polygon points="507.0,225.0 508.7,229.6 513.7,229.8 509.8,232.9 511.1,237.7 507.0,234.9 502.9,237.7 504.2,232.9 500.3,229.8 505.3,229.6" fill="#e88b2e"/></svg>
<div class="pp cap" style="left:382.9px;width:300px;text-align:center;top:303.8px;line-height:12px;white-space:nowrap">Fig. 2.&nbsp; <i>SVM Illustration</i></div>
<div class="pp bd" style="left:381.8px;top:335.6px;line-height:14px;white-space:nowrap;"><i>B.</i></div><div class="pp bd" style="left:403.8px;top:335.6px;line-height:14px;white-space:nowrap;"><i>KNN (K-Nearest Neighbour)</i></div>
<div class="pp bd nat" style="left:381.8px;top:355.6px;width:302.2px;line-height:13.57px;text-indent:17px">The K-Nearest neighbour algorithm is one of the best method for classifying the data based on the similarities among other collected cases. Everytime a new case is provided, the gap between each case in the model is calculated. Applying this method of classification states the cases that are being nearest to the neighbour.</div>
<div class="pp bd nat" style="left:381.8px;top:441.9px;width:302.2px;line-height:13.57px;text-indent:17px">This algorithm can continuously calculate the values of the particular target. So the median and average target values of the nearest neighbour is used to predict the value of new cases.</div>
<svg class="pp" style="left:400px;top:500px" width="290" height="190" viewBox="400 500 290 190"><path d="M428 510V676M420 668H616" stroke="#222" stroke-width="1.6" fill="none"/><circle cx="523" cy="594" r="60" fill="none" stroke="#222" stroke-width="1" stroke-dasharray="3 3"/><circle cx="523" cy="594" r="34" fill="none" stroke="#222" stroke-width="1" stroke-dasharray="3 3"/><text x="545" y="512" font-family="Liberation Sans, sans-serif" font-size="7.5" font-weight="bold" text-anchor="middle" fill="#222">New example</text><text x="545" y="523" font-family="Liberation Sans, sans-serif" font-size="7.5" font-weight="bold" text-anchor="middle" fill="#222">to classify</text><text x="578" y="520" font-family="Liberation Sans, sans-serif" font-size="10.5" font-weight="bold" fill="#d2233c">Class A</text><text x="578" y="537" font-family="Liberation Sans, sans-serif" font-size="10.5" font-weight="bold" fill="#2aa35a">Class B</text><text x="500" y="612" font-family="Liberation Sans, sans-serif" font-size="6.5" font-weight="bold" fill="#222">K=3</text><text x="500" y="638" font-family="Liberation Sans, sans-serif" font-size="6.5" font-weight="bold" fill="#222">K=7</text><text x="578" y="679" font-family="Liberation Sans, sans-serif" font-size="6.5" font-weight="bold" text-anchor="middle" fill="#222">X-Axis</text><text x="416" y="560" font-family="Liberation Sans, sans-serif" font-size="6.5" font-weight="bold" text-anchor="middle" fill="#222" transform="rotate(-90 416 560)">Y-Axis</text><path d="M527 525V586" stroke="#222" stroke-width="1"/><rect x="521" y="587" width="12" height="12" fill="#f0b429"/><text x="527" y="597" font-family="Liberation Sans, sans-serif" font-size="9" font-weight="bold" text-anchor="middle" fill="#7a3b00">?</text><polygon points="462.0,524.0 464.0,529.3 469.6,529.5 465.2,533.0 466.7,538.5 462.0,535.4 457.3,538.5 458.8,533.0 454.4,529.5 460.0,529.3" fill="#d2233c"/><polygon points="494.0,528.0 496.0,533.3 501.6,533.5 497.2,537.0 498.7,542.5 494.0,539.4 489.3,542.5 490.8,537.0 486.4,533.5 492.0,533.3" fill="#d2233c"/><polygon points="456.0,548.0 458.0,553.3 463.6,553.5 459.2,557.0 460.7,562.5 456.0,559.4 451.3,562.5 452.8,557.0 448.4,553.5 454.0,553.3" fill="#d2233c"/><polygon points="490.0,552.0 492.0,557.3 497.6,557.5 493.2,561.0 494.7,566.5 490.0,563.4 485.3,566.5 486.8,561.0 482.4,557.5 488.0,557.3" fill="#d2233c"/><polygon points="521.0,544.0 523.0,549.3 528.6,549.5 524.2,553.0 525.7,558.5 521.0,555.4 516.3,558.5 517.8,553.0 513.4,549.5 519.0,549.3" fill="#d2233c"/><polygon points="478.0,570.0 480.0,575.3 485.6,575.5 481.2,579.0 482.7,584.5 478.0,581.4 473.3,584.5 474.8,579.0 470.4,575.5 476.0,575.3" fill="#d2233c"/><polygon points="510.0,576.0 512.0,581.3 517.6,581.5 513.2,585.0 514.7,590.5 510.0,587.4 505.3,590.5 506.8,585.0 502.4,581.5 508.0,581.3" fill="#d2233c"/><polygon points="547.0,583.5 540.5,595.2 553.5,595.2" fill="#2aa35a"/><polygon points="531.0,605.5 524.5,617.2 537.5,617.2" fill="#2aa35a"/><polygon points="553.0,618.5 546.5,630.2 559.5,630.2" fill="#2aa35a"/><polygon points="588.0,578.5 581.5,590.2 594.5,590.2" fill="#2aa35a"/><polygon points="603.0,578.5 596.5,590.2 609.5,590.2" fill="#2aa35a"/><polygon points="587.0,599.5 580.5,611.2 593.5,611.2" fill="#2aa35a"/><polygon points="619.0,593.5 612.5,605.2 625.5,605.2" fill="#2aa35a"/><polygon points="601.0,615.5 594.5,627.2 607.5,627.2" fill="#2aa35a"/></svg>
<div class="pp cap" style="left:382.9px;width:300px;text-align:center;top:701.4px;line-height:12px;white-space:nowrap">Fig. 3.&nbsp; <i>KNN Illustration</i></div>
<div class="pp bd" style="left:381.8px;top:734.0px;line-height:14px;white-space:nowrap;"><i>C.</i></div><div class="pp bd" style="left:403.8px;top:734.0px;line-height:14px;white-space:nowrap;"><i>Deep SORT Algorithm</i></div>
<div class="pp bd nat" style="left:381.8px;top:752.2px;width:302.2px;line-height:13.57px;text-indent:17px">Deepsort algorithm is commonly used for tracking multiple objects and it is a detection based tracking method. The archetype of the Deep SORT calculation was SORT which represents Simple Online Realtime Tracking. This algorithm can be used for monitoring social distancing with the person and detecting the people without face mask.</div>
<div class="pp bd" style="left:381.8px;top:852.2px;line-height:14px;white-space:nowrap;"><i>D.</i></div><div class="pp bd" style="left:403.8px;top:852.2px;line-height:14px;white-space:nowrap;"><i>Naïve Bayes Algorithm</i></div>
<div class="pp bd nat" style="left:381.8px;top:868.8px;width:302.2px;line-height:13.57px;text-indent:17px;text-align-last:justify">The data mining procedures can be carried out in relationship with Naïve Bayes classifier algorithm as those tools can play a major role in diagnosing the COVID-19. Naïve Bayes is basically a supervised learning algorithm makes use of Bayes theorem with an presumption of naïve independence within the predictors. In this the probability of</div>
<div class="pp ft2" style="left:350.5px;width:40px;text-align:center;top:1003.0px;line-height:10px;white-space:nowrap">3</div>
<div class="pp ft2" style="left:105.3px;top:1012.0px;line-height:10px;white-space:nowrap;">Authorized licensed use limited to: IEEE Xplore. Downloaded on October 07,2023 at 04:59:56 UTC from IEEE Xplore.&nbsp; Restrictions apply.</div></div></div>
<div class="tn g" style="top:1424px">3</div>
</div>
<div id="viewer">

<svg style="left:62.60000000000002px;top:33px" width="36" height="36" viewBox="0 0 36 36" fill="none" stroke="#2b2b2b" stroke-width="2"><circle cx="18" cy="18" r="14.500"/><path d="M10.500 18h15" stroke-linecap="round"/></svg>
<div class="zt" style="left:161px;top:38px">47%</div>
<svg style="left:263px;top:46px" width="14" height="10" viewBox="0 0 14 10"><path d="M0.500 1h13L7 9.500z" fill="#8a8a8a"/></svg>
<svg style="left:331px;top:33px" width="36" height="36" viewBox="0 0 36 36" fill="none" stroke="#2b2b2b" stroke-width="2"><circle cx="18" cy="18" r="14.500"/><path d="M10.500 18h15M18 10.500v15" stroke-linecap="round"/></svg>
<div style="left:408px;top:41px;width:2px;height:19px;background:#e0e0e0"></div>
<svg style="left:458px;top:39px" width="24" height="24" viewBox="0 0 24 24" fill="none" stroke="#b5b5b5" stroke-width="1.800" stroke-linecap="round" stroke-linejoin="round"><path d="M2.500 3.500h19M3 19l9-9 9 9"/></svg>
<svg style="left:546px;top:38px" width="24" height="26" viewBox="0 0 24 26" fill="none" stroke="#b5b5b5" stroke-width="1.800" stroke-linecap="round" stroke-linejoin="round"><path d="M3 12.500l9-9 9 9M3 22.500l9-9 9 9"/></svg>
<div class="pbox">1  /  5</div>
<svg style="left:797px;top:39px" width="24" height="26" viewBox="0 0 24 26" fill="none" stroke="#2b2b2b" stroke-width="2" stroke-linecap="round" stroke-linejoin="round"><path d="M3 3.500l9 9 9-9M3 13.500l9 9 9-9"/></svg>

<div class="pgshadow" style="left:39px;top:254px"><div class="pg" style="left:0;top:0"><div class="pp hd" style="left:45.4px;top:20.6px;line-height:14px;white-space:nowrap;">2022 International Conference for Advancement in Technology (ICONAT)</div>
<div class="pp hd" style="left:45.4px;top:32.6px;line-height:14px;white-space:nowrap;">Goa, India. Jan 21-22, 2022</div>
<div class="pp ttl" style="left:20.5px;width:700px;text-align:center;top:66.8px;line-height:34px;white-space:nowrap">AI Techniques for Detecting and Diagnosing</div>
<div class="pp ttl" style="left:20.5px;width:700px;text-align:center;top:100.0px;line-height:34px;white-space:nowrap">COVID-19</div>
<div class="pp au" style="left:25.7px;width:240px;text-align:center;top:167.2px;line-height:13px;white-space:nowrap">Kshitij C Kurne</div>
<div class="pp au" style="left:25.7px;width:240px;text-align:center;top:180.1px;line-height:13px;white-space:nowrap"><i>Department of Computer Science and</i></div>
<div class="pp au" style="left:25.7px;width:240px;text-align:center;top:193.1px;line-height:13px;white-space:nowrap"><i>Engineering.</i></div>
<div class="pp au" style="left:25.7px;width:240px;text-align:center;top:205.1px;line-height:13px;white-space:nowrap"><i>M S Ramaiah Institute of Technology,</i></div>
<div class="pp au" style="left:25.7px;width:240px;text-align:center;top:217.7px;line-height:13px;white-space:nowrap">Bengaluru, India</div>
<div class="pp au" style="left:25.7px;width:240px;text-align:center;top:230.9px;line-height:13px;white-space:nowrap">kkurne7@gmail.com</div>
<div class="pp au" style="left:250.3px;width:240px;text-align:center;top:167.2px;line-height:13px;white-space:nowrap">Sini Anna Alex</div>
<div class="pp au" style="left:250.3px;width:240px;text-align:center;top:180.1px;line-height:13px;white-space:nowrap"><i>Department of Computer Science and</i></div>
<div class="pp au" style="left:250.3px;width:240px;text-align:center;top:193.1px;line-height:13px;white-space:nowrap"><i>Engineering</i></div>
<div class="pp au" style="left:250.3px;width:240px;text-align:center;top:205.1px;line-height:13px;white-space:nowrap"><i>M S Ramaiah Institute of Technology,</i></div>
<div class="pp au" style="left:250.3px;width:240px;text-align:center;top:217.7px;line-height:13px;white-space:nowrap">Bengaluru, India</div>
<div class="pp au" style="left:475.2px;width:240px;text-align:center;top:167.2px;line-height:13px;white-space:nowrap">Parkavi A</div>
<div class="pp au" style="left:475.2px;width:240px;text-align:center;top:180.1px;line-height:13px;white-space:nowrap"><i>Department of Computer Science and</i></div>
<div class="pp au" style="left:475.2px;width:240px;text-align:center;top:193.1px;line-height:13px;white-space:nowrap"><i>Engineering</i></div>
<div class="pp au" style="left:475.2px;width:240px;text-align:center;top:205.1px;line-height:13px;white-space:nowrap"><i>M S Ramaiah Institue of Technology,</i></div>
<div class="pp au" style="left:475.2px;width:240px;text-align:center;top:217.7px;line-height:13px;white-space:nowrap">Bengaluru, India</div>
<div class="pp ab" style="left:57.7px;top:258.0px;width:301.3px;line-height:12.93px"><div class="jl" style="padding-left:16.7px"><i>Abstract</i>— The new Coronavirus infection (COVID-19)</div><div class="jl">which has been declared by the World Health Organization</div><div class="jl">(WHO) has now spread all over the world. As per the few</div><div class="jl">examinations, the COVID-19 has side effects like dry cough,</div><div class="jl">sore throat, fever, gentle to direct respiratory disease and</div><div class="jl">muscle throbs. The COVID-19 causes an adverse consequence</div><div class="jl">on the lungs, it very well may be analyzed utilizing X-rays and</div><div class="ll">CT scans of the lungs.</div></div>
<div class="pp ab" style="left:57.7px;top:373.9px;width:301.3px;line-height:12.87px"><div class="jl" style="padding-left:16.7px">As COVID-19 diagnosing is the lengthy process for testing</div><div class="jl">and the vast majority of the strategies that are proposed might</div><div class="jl">give false-positive and false-negative result. This paper</div><div class="jl">predominantly points on the investigation and survey of the</div><div class="jl">execution of Machine Learning (ML) and Artificial Intelligence</div><div class="jl">(AI) techniques that are utilized to forestall and control the</div><div class="ll">spread of coronavirus all across the world.</div></div>
<div class="pp ab kw" style="left:57.7px;top:476.0px;width:301.3px;line-height:12.95px"><div class="jl" style="padding-left:16.7px">Keywords—Machine Learning (ML), Artificial Intelligence</div><div class="jl">(AI), COVID-19, Coronavirus image based diagnosis, Deep</div><div class="ll">Learning (DL)</div></div>
<div class="pp bd" style="left:162.4px;top:532.1px;line-height:14px;white-space:nowrap;">I.</div>
<div class="pp bd" style="left:188.7px;top:532.1px;line-height:14px;white-space:nowrap;">I<span class="sc">NTRODUCTION</span></div>
<div class="pp bd" style="left:57.7px;top:551.4px;width:301.3px;line-height:13.57px"><div class="jl" style="padding-left:16.7px">COVID-19 is a infectious disease, that has spread in</div><div class="jl">many countries very rapidly. The novel coronavirus, that is,</div><div class="jl">SARS-COV-2 which causes COVID-19, belongs to a family</div><div class="jl">of coronaviridae, which is a contagious virus. People</div><div class="jl">infected with this virus experience flue like symptoms</div><div class="jl">including, fever, cough, shortness, of breadth and fatigue.</div><div class="jl">The infected person can recover without any special</div><div class="jl">treatment, only if the person has experienced mild to</div><div class="jl">moderate respiratory illness, but if it is severe then special</div><div class="ll">treatment has to be provided, as this virus can cause death.</div></div>
<div class="pp bd" style="left:57.7px;top:694.4px;width:301.3px;line-height:13.57px"><div class="jl" style="padding-left:16.7px">This disease is prone to the older people, with the</div><div class="jl">medical problems like diabetes, cardiovascular disease or</div><div class="jl">chronic illness are prone to the virus. People usually get sick</div><div class="ll">for about 1 to 14 days prior developing the symptoms.</div></div>
<div class="pp bd" style="left:57.7px;top:756.5px;width:301.3px;line-height:13.48px"><div class="jl" style="padding-left:16.7px">World Health Organization (WHO) has advised all the</div><div class="jl">countries to get tested as the isolation of the people with</div><div class="jl">confirmed cases and mild symptoms in the health centers</div><div class="jl">will prevent the spread of the virus and also provides a</div><div class="jl">acceptable care in the health centers. The people are also</div><div class="jl">advised to maintain social distancing , wear a face mask and</div><div class="ll">sanitize the hands frequently.</div></div>
<div class="pp bd" style="left:57.7px;top:858.6px;width:301.3px;line-height:13.60px"><div class="jl" style="padding-left:16.7px">For diagnosing the COVID-19 an RT-PCR (real time</div><div class="jl">polymerase chain reaction) test is done, but it is time</div><div class="jl">consuming test and it sometimes produces a false-negative</div><div class="jl">result. However, with the use of chest X-ray, chest CT-scan</div><div class="jl">and other medical imaging techniques can play a crucial role</div><div class="ll">in diagnosing the COVID-19.</div></div>
<div class="pp bd" style="left:381.8px;top:258.2px;width:302.2px;line-height:13.70px"><div class="jl" style="padding-left:18px">Since Machine Learning (ML) and Artificial Intelligence</div><div class="jl">(AI) has brought a major change in the health care industries,</div><div class="jl">that can be used for taking decisions and diagnose the</div><div class="ll">patients rapidly and accurately.</div></div>
<div class="pp bd" style="left:381.8px;top:320.3px;width:302.2px;line-height:13.54px"><div class="jl" style="padding-left:18px">AI is a part of software engineering that spotlights on the</div><div class="jl">advancement of clever machines, that mimics human</div><div class="jl">knowledge like reasoning, critical thinking capacity and</div><div class="jl">numerous other human practices which incorporates picking</div><div class="jl">up, arranging and anticipating. What's more, ML is a sort of</div><div class="jl">man-made brainpower that helps programming applications</div><div class="jl">to be more precise in foreseeing the results, without being</div><div class="ll">customized expressly to do as such.</div></div>
<div class="pp bd" style="left:381.8px;top:436.2px;width:302.2px;line-height:13.40px"><div class="jl" style="padding-left:18px">The main aim of this paper is to systematically, sum up,</div><div class="jl">analyze and compare the different types of methods and</div><div class="jl">techniques that are being used to detect the coronavirus</div><div class="ll">disease and explore the role of AI and ML in it.</div></div>
<div class="pp bd" style="left:464.0px;top:507.5px;line-height:14px;white-space:nowrap;">II.</div>
<div class="pp bd" style="left:492.0px;top:507.5px;line-height:14px;white-space:nowrap;">RESEARCH METODS</div>
<div class="pp bd" style="left:381.8px;top:527.3px;width:302.2px;line-height:13.37px"><div class="jl" style="padding-left:18px">A methodology specifies the boundaries of the research</div><div class="jl">within which it has to be conducted. So a systematic</div><div class="jl">approach has been performed that provides a precise details</div><div class="ll">related to the corresponding field.</div></div>
<div class="pp bd" style="left:399.8px;top:588.1px;line-height:14px;white-space:nowrap;">The research methodology will give the details about:</div>
<div class="pp bd" style="left:400.5px;top:610.3px;line-height:14px;white-space:nowrap;">•</div>
<div class="pp bd" style="left:422.2px;top:610.3px;width:261.8px;line-height:13.90px"><div class="jl">The different sources from where the data is</div><div class="ll">collected.</div></div>
<div class="pp bd" style="left:400.5px;top:646.0px;line-height:14px;white-space:nowrap;">•</div>
<div class="pp bd" style="left:422.2px;top:646.0px;width:261.8px;line-height:13.90px"><div class="ll">Algorithms used.</div></div>
<div class="pp bd" style="left:400.5px;top:668.1px;line-height:14px;white-space:nowrap;">•</div>
<div class="pp bd" style="left:422.2px;top:668.6px;width:261.8px;line-height:13.10px"><div class="jl">Tools and methods that are used to collect the</div><div class="ll">datasets.</div></div>
<div class="pp bd" style="left:400.5px;top:702.9px;line-height:14px;white-space:nowrap;">•</div>
<div class="pp bd" style="left:422.2px;top:702.9px;width:261.8px;line-height:13.90px"><div class="ll">Techniques used for getting the result.</div></div>
<div class="pp bd" style="left:457.0px;top:733.8px;line-height:14px;white-space:nowrap;">III.</div>
<div class="pp bd" style="left:487.0px;top:733.8px;line-height:14px;white-space:nowrap;">O<span class="sc">VERVIEW OF</span> COVID-19</div>
<div class="pp bd" style="left:381.8px;top:754.3px;width:302.2px;line-height:13.90px"><div class="jl" style="padding-left:18px">In this section the symptoms of COVID-19, the basic</div><div class="jl">steps taken to prevent and diagnose the spread of COVID-</div><div class="ll">19 based on the medical professionals point of view.</div></div>
<div class="pp bd" style="left:382.4px;top:804.2px;line-height:14px;white-space:nowrap;"><i>A.</i></div>
<div class="pp bd" style="left:404.5px;top:804.2px;line-height:14px;white-space:nowrap;"><i>Symptoms of COVID-19</i></div>
<div class="pp bd" style="left:381.8px;top:821.0px;width:302.2px;line-height:14.00px"><div class="jl" style="padding-left:18px">The symptoms of COVID-19 can be divided into two</div><div class="ll">categories based common symptoms and the other rare caes.</div></div>
<div class="pp bd" style="left:381.8px;top:856.5px;width:302.2px;line-height:13.50px"><div class="jl" style="padding-left:18px">Most of the patients infected with coronavirus usually</div><div class="jl">develop common symptoms like fever, exhaustion and dry</div><div class="jl">cough whereas few group of people may experience some</div><div class="jl">extra symptoms like body aches and pains, nasal congestion,</div><div class="jl">sore throat, diarrhoea and runny nose. In other cases</div><div class="jl">symptoms can be more dangerous compared to the common</div><div class="jl">symptoms because they can lead to death of the person</div></div>
<div class="pp ft1" style="left:45.5px;top:1000.5px;line-height:11px;white-space:nowrap;">© IEEE 2022. This article is free to access and download, along with rights for full text and data mining, re-use and analysis.</div>
<div class="pp ft2" style="left:105.3px;top:1010.3px;line-height:10px;white-space:nowrap;">Authorized licensed use limited to: IEEE Xplore. Downloaded on October 07,2023 at 04:59:56 UTC from IEEE Xplore.&nbsp; Restrictions apply.</div>
<div class="pp side" style="left:19px;top:970px">2022 International Conference for Advancement in Technology (ICONAT) | 978-1-6654-2577-3/22/$31.00 ©2022 IEEE | DOI: 10.1109/ICONAT53423.2022.9725835</div></div></div>
</div>
<div id="ai">
<div style="left:30px;top:30px"><svg width="36" height="35.0" viewBox="0 -0.500 36 35" fill="none" stroke-width="4.400" stroke-linecap="round">
<path d="M7.500 17A7.600 7.600 0 1 0 18 25" stroke="#f7c422"/>
<path d="M18 25A7.600 7.600 0 1 0 28.500 17" stroke="#38cb93"/>
<path d="M28.500 17A7.600 7.600 0 1 0 18 9" stroke="#3f9fee"/>
<path d="M18 9A7.600 7.600 0 1 0 7.500 17" stroke="#a97bf7"/>
</svg></div>
<div class="ait">UPDF AI</div>
<div class="badge">
<svg style="left:13px;top:11px" width="17" height="21" viewBox="0 0 17 21"><path d="M2.500 0h12c1.400 0 2.500 1.100 2.500 2.500v16c0 1.400-1.100 2.500-2.500 2.500h-12C1.100 21 0 19.900 0 18.500v-16C0 1.100 1.100 0 2.500 0z" fill="#b48df2"/><path d="M4.500 6h8M4.500 10h8M4.500 14h5" stroke="#fff" stroke-width="1.800"/></svg>
<span style="left:33px">99</span>
<div style="left:72px;top:10px;width:2px;height:24px;background:#e0d2f8"></div>
<svg style="left:86px;top:11px" width="23" height="22" viewBox="0 0 23 22"><path d="M2 0h19c1.100 0 2 .9 2 2v12c0 1.100-.9 2-2 2h-6l-3.500 5-1-5H2c-1.100 0-2-.9-2-2V2C0 .9.900 0 2 0z" fill="#b48df2"/><path d="M6 6v4M11.500 6v4M17 6v4" stroke="#fff" stroke-width="2"/></svg>
<span style="left:114px">998</span>
</div>
<svg style="left:732px;top:30px" width="23" height="33" viewBox="0 0 26 34" preserveAspectRatio="none" fill="none" stroke="#8d8d8d" stroke-width="2" stroke-linejoin="round" stroke-linecap="round"><path d="M10 13V5.500C10 3.500 11.300 2 13 2s3 1.500 3 3.500V13M3.500 19c0-3.500 3-6 6.500-6h6c3.500 0 6.500 2.500 6.500 6M2.500 19h21v10.500c0 1.500-1 2.500-2.500 2.500H5c-1.500 0-2.500-1-2.500-2.500zM9.500 32v-6M16.500 32v-6"/></svg>
<div style="left:26px;top:88px;width:746px;height:2px;background:#e9e9e9"></div>
<div class="tabs" style="left:44px;top:106px"><div class="tabon"></div><div class="tabl" style="left:4px">Ask PDF</div><div class="tabl" style="left:344px">Chat</div></div>
<div style="left:28px;top:286px;width:721px;height:107px;overflow:hidden"><div class="card" style="position:absolute;left:0;top:-60px;width:721px;height:167px;border-radius:16px"></div><div class="msg" style="position:absolute;left:104.8px;top:-19.3px;letter-spacing:0.54px">symptoms categorized into common and rare.</div><div class="msg" style="position:absolute;left:84.5px;top:15.2px"><span style="font-size:37px;line-height:36px;letter-spacing:0">•</span></div><div class="msg" style="position:absolute;left:104.8px;top:16.7px;letter-spacing:0.43px">Importance of early diagnosis and treatment.</div><div class="msg" style="position:absolute;left:84.5px;top:51.2px"><span style="font-size:37px;line-height:36px;letter-spacing:0">•</span></div><div class="msg" style="position:absolute;left:104.8px;top:52.8px;letter-spacing:0.32px">Measures to prevent</div><div style="position:absolute;left:0;top:0;width:721px;height:9px;background:linear-gradient(180deg,rgba(239,239,239,1) 0%,rgba(239,239,239,.9) 55%,rgba(239,239,239,0) 100%)"></div></div>
<div class="card fcard" style="left:24px;top:178px">
<svg style="left:33px;top:19px" width="50" height="62" viewBox="0 0 50 62"><defs><linearGradient id="pg1" x1="0" y1="0" x2="0" y2="1"><stop offset="0" stop-color="#a45cf6"/><stop offset="1" stop-color="#7a3be8"/></linearGradient></defs><path d="M3 0h32l15 15v44c0 1.700-1.300 3-3 3H3c-1.700 0-3-1.300-3-3V3C0 1.300 1.300 0 3 0z" fill="url(#pg1)"/><path d="M35 0l15 15H38c-1.700 0-3-1.300-3-3z" fill="#cfa8ff"/><path d="M0 35h13v3H0z" fill="#f6c026"/><path d="M13 35h12v3H13z" fill="#3fcf8e"/><path d="M25 35h12v3H25z" fill="#4aa3f0"/><path d="M37 35h13v3H37z" fill="#c58bff"/><text x="25" y="56" font-family="Liberation Sans, sans-serif" font-weight="bold" font-size="16.500" fill="#fff" text-anchor="middle">PDF</text></svg>
<div class="fname">AI_Techniques_for_Detecting_and_Diagnosing_COVI...</div>
<div class="fmeta">PDF · 446.1 KB · 5 pages</div>
</div>
<div class="hl" style="left:385px;top:384px"></div>
<div class="pbtn" style="left:402px;top:410px">Proofread Page Number 1</div>
<div class="lbl" style="left:28px;top:514px">UPDF AI</div>
<svg style="left:706px;top:514px" width="32" height="26" viewBox="0 0 32 26" fill="none" stroke="#c9c9c9" stroke-width="1.800" stroke-linecap="round"><rect x="9" y="3" width="20" height="20" rx="4"/><path d="M3 4v10c0 3 1.500 5 4 5.500"/></svg>
<div style="left:28px;top:558px;width:721px;height:679px;overflow:hidden"><div class="card" style="position:absolute;left:0;top:0;width:721px;height:800px;border-radius:16px"></div><div class="msg" style="position:absolute;left:24.59999999999991px;top:20.7px"><div style="letter-spacing:0.375px">Based on the provided content, here's a proofread version</div><div style="letter-spacing:-0.18px">of Page 1:</div><div style="letter-spacing:0.339px"><b>AI Techniques for Detecting and Diagnosing COVID-19</b></div><div style="letter-spacing:-0.14px"><i>Authors:</i></div><div style="letter-spacing:-0.15px"><b>Kshitij C Kurne</b></div><div style="letter-spacing:0.224px">Department of Computer Science and Engineering, M.S.</div><div style="letter-spacing:0.297px">Ramaiah Institute of Technology, Bengaluru, India</div><div style="letter-spacing:0.315px">kkurne7@gmail.com</div><div style="letter-spacing:0.2px"><b>Sini Anna Alex</b></div><div style="letter-spacing:0.224px">Department of Computer Science and Engineering, M.S.</div><div style="letter-spacing:0.297px">Ramaiah Institute of Technology, Bengaluru, India</div><div style="letter-spacing:0.084px"><b>Parkavi A</b></div><div style="letter-spacing:0.224px">Department of Computer Science and Engineering, M.S.</div><div style="letter-spacing:0.297px">Ramaiah Institute of Technology, Bengaluru, India</div><div style="letter-spacing:0.15px"><b>Abstract—</b> The novel Coronavirus infection (COVID-19),</div><div style="letter-spacing:0.465px">declared a global pandemic by the World Health</div><div style="letter-spacing:0.37px">Organization (WHO), has spread worldwide. According to</div><div style="letter-spacing:0.169px">several studies, COVID-19 symptoms include a dry cough,</div><div style="letter-spacing:0.365px">sore throat, fever, mild to moderate respiratory illness, and</div></div><div style="position:absolute;left:0;bottom:0;width:721px;height:8px;background:linear-gradient(180deg,rgba(239,239,239,0),rgba(239,239,239,.85))"></div></div>
<div class="card inp" style="left:24px;top:1258px">
<div class="ph">Ask something</div>
<svg style="left:669.5999999999999px;top:28.5px" width="34" height="36" viewBox="0 0 34 36" fill="none" stroke="#222" stroke-width="1.800" stroke-linecap="round" stroke-linejoin="round"><path d="M17 9c-5 0-8.500 3.800-8.500 8.200 0 3 1.700 5 3.200 6.600.8.900 1.300 1.700 1.300 3.200h8c0-1.500.5-2.300 1.300-3.200 1.500-1.600 3.200-3.600 3.200-6.600C25.500 12.800 22 9 17 9zM13.500 30.500h7M14.500 33.500h5M17 2v3M6.500 6.500l2 2M27.500 6.500l-2 2M2 16.500h3M29 16.500h3"/></svg>
<svg style="left:673px;top:106px" width="32" height="28" viewBox="0 0 32 28"><path d="M1.500 1.500c-.6-.9.300-1.800 1.300-1.400L30 12.500c1.200.5 1.200 2.200 0 2.700L3 27.700c-1 .5-2-.4-1.500-1.400L4 16l13-2-13-2.200z" fill="#8a55f3"/></svg>
</div>
</div>
<div id="rtb">
<svg style="left:39.0px;top:29.0px" width="38" height="38" viewBox="0 0 38 38" fill="none" stroke="#2b2b2b" stroke-width="2" stroke-linecap="round" stroke-linejoin="round"><circle cx="15.500" cy="15.500" r="12"/><path d="M10 11.500c-.8 1.200-1 2.500-.8 3.800"/><path d="M24.300 24.300l3 2.800"/><path d="M27 26.800l6 5.700" stroke-width="5"/></svg>
<div class="hsep" style="left:46px;top:104px;background:#d4d4d4"></div>
<svg style="left:36.5px;top:143.0px" width="40" height="36" viewBox="0 0 40 36" fill="none" stroke="#2b2b2b" stroke-width="2" stroke-linecap="round" stroke-linejoin="round"><path d="M6 11V5.500C6 3.500 7.500 2 9.500 2h21C32.500 2 34 3.500 34 5.500V11M1.500 11.500h37M6 16v14.500c0 2 1.500 3.500 3.500 3.500h21c2 0 3.500-1.500 3.500-3.500V16"/><text x="9" y="29" font-family="Liberation Sans, sans-serif" font-weight="bold" font-size="12" textLength="22" lengthAdjust="spacingAndGlyphs" fill="#2b2b2b" stroke="none">OCR</text></svg>
<svg style="left:40.5px;top:222.5px" width="32" height="38" viewBox="0 0 32 38" fill="none" stroke="#2b2b2b" stroke-width="2" stroke-linecap="round" stroke-linejoin="round"><path d="M20 2H6C4 2 2.500 3.500 2.500 5.500v27c0 2 1.500 3.500 3.500 3.500h20c2 0 3.500-1.500 3.500-3.500V11.500zM20 2v6c0 2 1.500 3.500 3.500 3.500h6"/><path d="M9.500 20c0-3.500 3-6.500 6.500-6.500 1.500 0 3 .5 4 1.500M22.500 22c0 3.500-3 6.500-6.500 6.500-1.500 0-3-.5-4-1.500"/><path d="M17.500 11.500l3.500 3.500-4 2.500zM14.500 30.500l-3.500-3.500 4-2.500z" fill="#2b2b2b" stroke-width="1"/></svg>
<svg style="left:40.0px;top:303.0px" width="34" height="38" viewBox="0 0 34 38" fill="none" stroke="#2b2b2b" stroke-width="2" stroke-linecap="round" stroke-linejoin="round"><path d="M11 36H6c-2 0-3.500-1.500-3.500-3.500v-27C2.500 3.500 4 2 6 2h14l9.500 9.500V15M20 2v6c0 2 1.500 3.500 3.500 3.500h6"/><rect x="17" y="23" width="15" height="13" rx="2.500"/><path d="M20.500 23v-3c0-2.200 1.800-4 4-4s4 1.800 4 4v3M23 29.500h3"/></svg>
<svg style="left:39.5px;top:384.0px" width="34" height="38" viewBox="0 0 34 38" fill="none" stroke="#2b2b2b" stroke-width="2" stroke-linecap="round" stroke-linejoin="round"><path d="M11.500 13.500H6.500c-2 0-3.500 1.500-3.500 3.500v15c0 2 1.500 3.500 3.500 3.500h21c2 0 3.500-1.500 3.500-3.500V17c0-2-1.500-3.500-3.500-3.500h-5M17 25V2.500M9.500 10L17 2.500l7.500 7.500"/></svg>
<svg style="left:38.0px;top:467.0px" width="36" height="30" viewBox="0 0 36 30" fill="none" stroke="#2b2b2b" stroke-width="2" stroke-linecap="round" stroke-linejoin="round"><rect x="2" y="2" width="32" height="26" rx="4.500"/><path d="M7.500 9.500L18 17.500l10.500-8"/></svg>
<div class="hsep" style="left:46px;top:538px;background:#d4d4d4"></div>
<svg style="left:40.0px;top:577.5px" width="32" height="34" viewBox="0 0 32 34" fill="none" stroke="#2b2b2b" stroke-width="2" stroke-linecap="round" stroke-linejoin="round"><path d="M6 2h19l5 5.500V28.500c0 2-1.500 3.500-3.500 3.500h-21C3.500 32 2 30.500 2 28.500v-23C2 3.500 3.500 2 5.500 2z"/><path d="M10 2.500v5h10v-5"/><circle cx="16" cy="20.500" r="5.200"/></svg>
<div style="left:32px;top:1306px;width:48px;height:48px;border-radius:9px;background:#fff"><div style="position:absolute;left:7px;top:7px"><svg width="34" height="33.1" viewBox="0 -0.500 36 35" fill="none" stroke-width="4.400" stroke-linecap="round">
<path d="M7.500 17A7.600 7.600 0 1 0 18 25" stroke="#f7c422"/>
<path d="M18 25A7.600 7.600 0 1 0 28.500 17" stroke="#38cb93"/>
<path d="M28.500 17A7.600 7.600 0 1 0 18 9" stroke="#3f9fee"/>
<path d="M18 9A7.600 7.600 0 1 0 7.500 17" stroke="#a97bf7"/>
</svg></div></div>
<svg style="left:39.5px;top:1392.0px" width="34" height="36" viewBox="0 0 34 36" fill="none" stroke="#2b2b2b" stroke-width="2" stroke-linecap="round" stroke-linejoin="round"><path d="M5 2.500h24c1.700 0 3 1.300 3 3v17c0 1.700-1.300 3-3 3h-7.500L17 31.500 12.500 25.500H5c-1.700 0-3-1.300-3-3v-17c0-1.700 1.300-3 3-3z"/><path d="M8.500 10h17M8.500 14.500h17M8.500 19h10" stroke-width="1.700"/></svg>
</div>
</div>
<svg id="notch" width="16" height="50" viewBox="0 0 16 50"><path d="M0 0C0.500 8 10.500 12 10.500 24C10.500 36 0.500 40 0 47Z" fill="#363636"/></svg>
<div id="dot"></div>
</div>
</body></html>
